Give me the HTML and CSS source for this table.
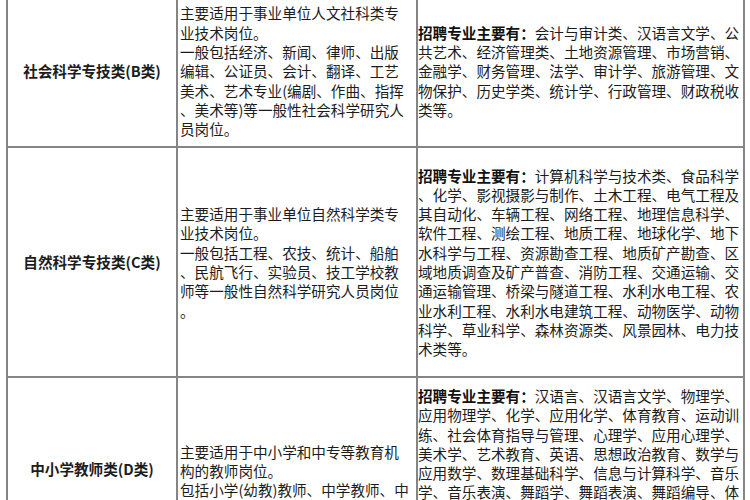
FILE: index.html
```html
<!DOCTYPE html>
<html lang="zh-CN">
<head>
<meta charset="utf-8">
<title>事业单位岗位分类</title>
<link rel="stylesheet" href="styles.css">
</head>
<body>
<table class="grid">
  <colgroup>
    <col class="c-type">
    <col class="c-desc">
    <col class="c-major">
  </colgroup>
  <tbody>
    <tr class="row row-b">
      <td class="type">社会科学专技类(B类)</td>
      <td class="desc">主要适用于事业单位人文社科类专<br>业技术岗位。<br>一般包括经济、新闻、律师、出版<br>编辑、公证员、会计、翻译、工艺<br>美术、艺术专业(编剧、作曲、指挥<br>、美术等)等一般性社会科学研究人<br>员岗位。</td>
      <td class="major"><b>招聘专业主要有：</b>会计与审计类、汉语言文学、公共艺术、经济管理类、土地资源管理、市场营销、金融学、财务管理、法学、审计学、旅游管理、文物保护、历史学类、统计学、行政管理、财政税收类等。</td>
    </tr>
    <tr class="row row-c">
      <td class="type">自然科学专技类(C类)</td>
      <td class="desc">主要适用于事业单位自然科学类专<br>业技术岗位。<br>一般包括工程、农技、统计、船舶<br>、民航飞行、实验员、技工学校教<br>师等一般性自然科学研究人员岗位<br>。</td>
      <td class="major"><b>招聘专业主要有：</b>计算机科学与技术类、食品科学、化学、影视摄影与制作、土木工程、电气工程及其自动化、车辆工程、网络工程、地理信息科学、软件工程、测绘工程、地质工程、地球化学、地下水科学与工程、资源勘查工程、地质矿产勘查、区域地质调查及矿产普查、消防工程、交通运输、交通运输管理、桥梁与隧道工程、水利水电工程、农业水利工程、水利水电建筑工程、动物医学、动物科学、草业科学、森林资源类、风景园林、电力技术类等。</td>
    </tr>
    <tr class="row row-d">
      <td class="type">中小学教师类(D类)</td>
      <td class="desc desc-d">主要适用于中小学和中专等教育机<br>构的教师岗位。<br>包括小学(幼教)教师、中学教师、中<br>等专业学校教员等。</td>
      <td class="major major-d"><b>招聘专业主要有：</b>汉语言、汉语言文学、物理学、应用物理学、化学、应用化学、体育教育、运动训练、社会体育指导与管理、心理学、应用心理学、美术学、艺术教育、英语、思想政治教育、数学与应用数学、数理基础科学、信息与计算科学、音乐学、音乐表演、舞蹈学、舞蹈表演、舞蹈编导、体育教育、学前教育、小学教育、特殊教育、教育技术学、计算机科学与技术、历史学、地理科学、生物科学等。</td>
    </tr>
  </tbody>
</table>
</body>
</html>
```
FILE: styles.css
```css
html, body {
  margin: 0;
  padding: 0;
  background: #ffffff;
  overflow: hidden;
}

body {
  font-family: "Noto Sans CJK SC", "Noto Sans", sans-serif;
  color: #1c1c1c;
  font-size: 14.6px;
  line-height: 19.3px;
}

.grid {
  margin: -6px 0 0 6px;
  border-collapse: collapse;
  table-layout: fixed;
  width: 737px;
}

.c-type { width: 170px; }
.c-desc { width: 240px; }
.c-major { width: 327px; }

.cell-base,
.grid td {
  border: 2px solid #858585;
  vertical-align: middle;
}

.row-b { height: 152px; }
.row-c { height: 230px; }
.row-d { height: 178px; }

.type {
  padding: 0;
  text-align: center;
  font-weight: 700;
}

.desc {
  padding: 0 1px 0 2px;
  white-space: nowrap;
}

.desc.desc-d {
  padding-top: 23px;
}

.major {
  padding: 0;
  line-break: anywhere;
}

.major.major-d {
  padding-top: 8px;
}

.major b {
  font-weight: 700;
  color: #111111;
}
```
